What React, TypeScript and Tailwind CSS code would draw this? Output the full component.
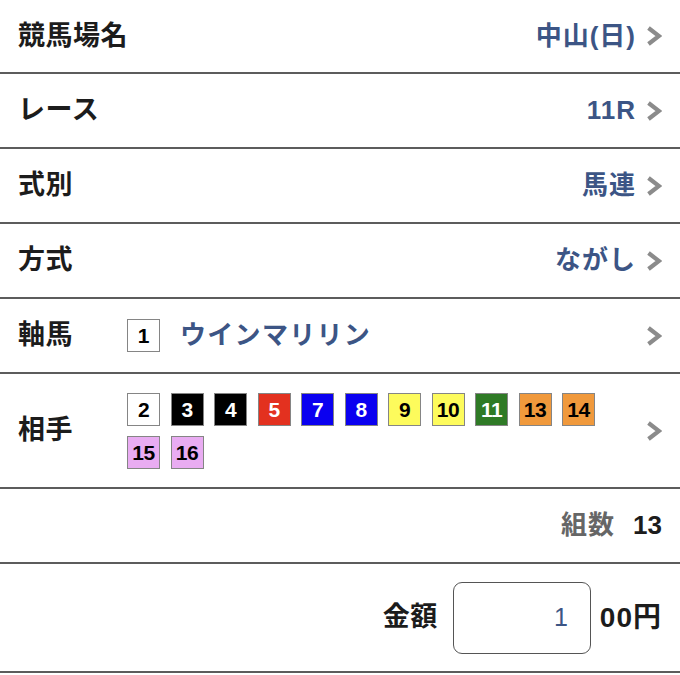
import React from "react"

const font = { fontFamily: '"Liberation Sans", "Noto Sans CJK JP", sans-serif' }

type Horse = { n: number; bg: string; fg: string }

const partners: Horse[] = [
  { n: 2, bg: "bg-white", fg: "text-black" },
  { n: 3, bg: "bg-black", fg: "text-white" },
  { n: 4, bg: "bg-black", fg: "text-white" },
  { n: 5, bg: "bg-[#e3311f]", fg: "text-white" },
  { n: 7, bg: "bg-[#0a00f0]", fg: "text-white" },
  { n: 8, bg: "bg-[#0a00f0]", fg: "text-white" },
  { n: 9, bg: "bg-[#fdfb5c]", fg: "text-black" },
  { n: 10, bg: "bg-[#fdfb5c]", fg: "text-black" },
  { n: 11, bg: "bg-[#2f7a26]", fg: "text-white" },
  { n: 13, bg: "bg-[#f0993c]", fg: "text-black" },
  { n: 14, bg: "bg-[#f0993c]", fg: "text-black" },
  { n: 15, bg: "bg-[#e9acf2]", fg: "text-black" },
  { n: 16, bg: "bg-[#e9acf2]", fg: "text-black" },
]

function Chevron() {
  return (
    <svg width="16" height="20" viewBox="0 0 16 20" className="shrink-0">
      <path d="M2.5 2 L13 10 L2.5 18" fill="none" stroke="#8b8b8b" strokeWidth="4.2" strokeLinecap="butt" strokeLinejoin="miter" />
    </svg>
  )
}

function Badge({ h }: { h: Horse }) {
  return (
    <div
      className={`w-[33px] h-[33px] border-[1.5px] border-[#858585] flex items-center justify-center text-[21px] font-bold leading-none tracking-[-0.5px] ${h.bg} ${h.fg}`}
    >
      {h.n}
    </div>
  )
}

function SelectRow({ label, value, first }: { label: string; value: string; first?: boolean }) {
  return (
    <div
      className={`flex items-center justify-between px-[18px] border-b-2 border-[#5c5c5c] ${first ? "h-[74px]" : "h-[75px]"}`}
    >
      <span className="text-[27px] font-bold text-[#1c1c1c] tracking-[0.5px]">{label}</span>
      <div className="flex items-center gap-[10px]">
        <span className="text-[26px] font-bold text-[#3c5585] tracking-[1px]">{value}</span>
        <Chevron />
      </div>
    </div>
  )
}

export default function App() {
  return (
    <div className="w-[680px] h-[675px] bg-white overflow-hidden" style={font}>
      <SelectRow label="競馬場名" value="中山(日)" first />
      <SelectRow label="レース" value="11R" />
      <SelectRow label="式別" value="馬連" />
      <SelectRow label="方式" value="ながし" />

      {/* 軸馬 */}
      <div className="flex items-center h-[75px] px-[18px] border-b-2 border-[#5c5c5c]">
        <span className="w-[109px] text-[27px] font-bold text-[#1c1c1c] tracking-[0.5px]">軸馬</span>
        <div className="w-[33px] h-[33px] border-[1.5px] border-[#858585] bg-white flex items-center justify-center text-[21px] font-bold leading-none text-black">
          1
        </div>
        <span className="ml-[20px] text-[26px] font-bold text-[#3c5585] tracking-[1.3px]">ウインマリリン</span>
        <div className="ml-auto">
          <Chevron />
        </div>
      </div>

      {/* 相手 */}
      <div className="flex items-center h-[115px] px-[18px] border-b-2 border-[#5c5c5c]">
        <span className="w-[109px] shrink-0 text-[27px] font-bold text-[#1c1c1c] tracking-[0.5px]">相手</span>
        <div className="flex flex-wrap gap-x-[10.5px] gap-y-[10px] w-[480px]">
          {partners.map((h) => (
            <Badge key={h.n} h={h} />
          ))}
        </div>
        <div className="ml-auto">
          <Chevron />
        </div>
      </div>

      {/* 組数 */}
      <div className="flex items-center justify-end h-[75px] px-[18px] border-b-2 border-[#5c5c5c]">
        <span className="text-[26px] font-bold text-[#666666] tracking-[1px]">組数</span>
        <span className="ml-[18px] text-[26px] font-bold text-[#1c1c1c]">13</span>
      </div>

      {/* 金額 */}
      <div className="flex items-center justify-end h-[109px] px-[18px] border-b-2 border-[#5c5c5c]">
        <span className="text-[27px] font-bold text-[#1c1c1c] tracking-[0.5px]">金額</span>
        <div className="ml-[15px] w-[138px] h-[72px] border-[1.5px] border-[#555555] rounded-[9px] flex items-center justify-end pr-[22px]">
          <span className="text-[25px] text-[#3c5585]">1</span>
        </div>
        <span className="ml-[9px] text-[28px] font-bold text-[#1c1c1c] tracking-[1px]">00円</span>
      </div>
    </div>
  )
}
